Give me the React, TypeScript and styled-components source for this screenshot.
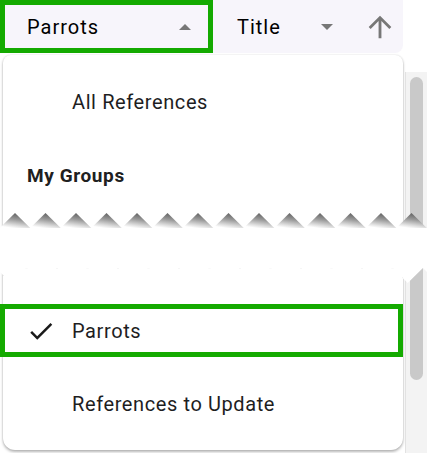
import React from "react";
import styled, { createGlobalStyle } from "styled-components";

const GlobalStyle = createGlobalStyle`
  html, body {
    margin: 0;
    background: #ffffff;
    overflow: hidden;
  }
  body {
    font-family: Roboto, "Liberation Sans", Arial, sans-serif;
  }
`;

const GREEN = "#14aa00";
const TEAR_PERIOD = 30.5;
const TEAR_DEPTH = 15;

const Page = styled.div`
  width: 427px;
  height: 453px;
  overflow: hidden;
  display: flex;
  flex-direction: column;
`;

const Toolbar = styled.div`
  display: flex;
  align-items: stretch;
  width: 403px;
  height: 53px;
  background: #f7f5fb;
  border-bottom-right-radius: 8px;
  flex: none;
`;

const SelectBox = styled.div<{ $width: number; $active?: boolean; $padLeft: number }>`
  box-sizing: border-box;
  width: ${(p) => p.$width}px;
  display: flex;
  align-items: center;
  justify-content: space-between;
  padding: 0 17px 0 ${(p) => p.$padLeft}px;
  border: ${(p) => (p.$active ? `5px solid ${GREEN}` : "none")};
  font-size: 20px;
  letter-spacing: 1px;
  color: #000;
`;

const DirectionButton = styled.div`
  flex: 1;
  display: flex;
  align-items: center;
  padding-left: 13px;
  color: #777;
`;

const Piece = styled.div<{ $lower?: boolean }>`
  position: relative;
  display: flex;
  align-items: flex-start;
  flex: none;
  height: ${(p) => (p.$lower ? 185 : 173)}px;
  margin-top: ${(p) => (p.$lower ? 40 : 2)}px;
`;

const Panel = styled.div<{ $lower?: boolean }>`
  box-sizing: border-box;
  margin-left: 3px;
  width: 400px;
  height: ${(p) => (p.$lower ? "182px" : "100%")};
  background: #fff;
  display: flex;
  flex-direction: column;
  gap: 21px;
  padding: ${(p) => (p.$lower ? "36px 0 20px" : "21px 0 0")};
  border-radius: ${(p) => (p.$lower ? "0 0 12px 12px" : "8px 8px 0 0")};
  box-shadow: 0 2px 3px rgba(0, 0, 0, 0.28), 0 0 2px rgba(0, 0, 0, 0.14);
`;

const Track = styled.div<{ $lower?: boolean }>`
  box-sizing: border-box;
  margin-left: 2px;
  width: 22px;
  height: ${(p) => (p.$lower ? "185px" : "156px")};
  margin-top: ${(p) => (p.$lower ? 0 : 17)}px;
  background: #f3f3f3;
  border-left: 1px solid #e2e2e2;
  padding: ${(p) => (p.$lower ? "0 4px" : "5px 4px 0")};
  display: flex;
  flex-direction: column;
`;

const Thumb = styled.div<{ $lower?: boolean }>`
  width: 13px;
  height: ${(p) => (p.$lower ? "112px" : "100%")};
  background: #c9c9c9;
  border-radius: ${(p) => (p.$lower ? "0 0 7px 7px" : "7px 7px 0 0")};
`;

const MenuItem = styled.div<{ $selected?: boolean }>`
  box-sizing: border-box;
  display: flex;
  align-items: center;
  flex: none;
  height: ${(p) => (p.$selected ? 53 : 52)}px;
  margin-left: ${(p) => (p.$selected ? -3 : 0)}px;
  padding-left: ${(p) => (p.$selected ? 22 : 24)}px;
  border: ${(p) => (p.$selected ? `5px solid ${GREEN}` : "none")};
  font-size: 20px;
  letter-spacing: 0.6px;
  color: #1e1e1f;
`;

const IconSlot = styled.span`
  width: 45px;
  flex: none;
  display: flex;
  align-items: center;
  color: #1a1a1a;
`;

const GroupHeader = styled.div`
  display: flex;
  align-items: center;
  flex: none;
  height: 52px;
  padding-left: 24px;
  font-size: 19px;
  font-weight: 700;
  letter-spacing: 0.6px;
  color: #202020;
`;

const Tear = styled.svg`
  position: absolute;
  left: 0;
  bottom: 0;
  display: block;
`;

const Caret = ({ up }: { up?: boolean }) => (
  <svg width="12" height="6" viewBox="0 0 12 6">
    <polygon points={up ? "0,6 6,0 12,6" : "0,0 12,0 6,6"} fill="#777" />
  </svg>
);

const ArrowUp = () => (
  <svg width="34" height="34" viewBox="0 0 24 24">
    <path fill="currentColor" d="M4 12l1.41 1.41L11 7.83V20h2V7.83l5.58 5.59L20 12l-8-8-8 8z" />
  </svg>
);

const Check = () => (
  <svg width="30" height="30" viewBox="0 0 24 24" style={{ marginLeft: -1 }}>
    <path fill="currentColor" d="M9 16.17L4.83 12l-1.42 1.41L9 19 21 7l-1.41-1.41z" />
  </svg>
);

// jagged top edge of the lower piece
const lowerClip = () => {
  const pts: string[] = ["-10px 15px"];
  for (let peak = 423 - TEAR_PERIOD * 14; peak < 460; peak += TEAR_PERIOD) {
    pts.push(`${peak - TEAR_PERIOD / 2}px ${TEAR_DEPTH}px`);
    pts.push(`${peak}px 0px`);
  }
  pts.push("470px 15px", "470px 200px", "-10px 200px");
  return `polygon(${pts.join(", ")})`;
};

const TearEdge = () => {
  const peaks = Array.from({ length: 14 }, (_, k) => 15 + k * TEAR_PERIOD);
  return (
    <Tear width="427" height={TEAR_DEPTH} viewBox={`0 0 427 ${TEAR_DEPTH}`}>
      <defs>
        <linearGradient id="tearShade" x1="0.7" y1="0" x2="0.4" y2="1">
          <stop offset="0" stopColor="#5a5a5a" />
          <stop offset="0.45" stopColor="#9a9a9a" />
          <stop offset="0.8" stopColor="#dcdcdc" />
          <stop offset="1" stopColor="#ffffff" />
        </linearGradient>
      </defs>
      {peaks.map((p) => (
        <polygon
          key={p}
          points={`${p - TEAR_PERIOD / 2},${TEAR_DEPTH} ${p},0 ${p + TEAR_PERIOD / 2},${TEAR_DEPTH}`}
          fill="url(#tearShade)"
        />
      ))}
    </Tear>
  );
};

export default function App() {
  return (
    <>
      <GlobalStyle />
      <Page>
        <Toolbar>
          <SelectBox $width={213} $padLeft={22} $active>
            <span>Parrots</span>
            <Caret up />
          </SelectBox>
          <SelectBox $width={137} $padLeft={24}>
            <span>Title</span>
            <Caret />
          </SelectBox>
          <DirectionButton>
            <ArrowUp />
          </DirectionButton>
        </Toolbar>

        <Piece style={{ clipPath: "inset(-10px -10px 0 -10px)" }}>
          <Panel>
            <MenuItem>
              <IconSlot />
              All References
            </MenuItem>
            <GroupHeader>My Groups</GroupHeader>
          </Panel>
          <Track>
            <Thumb />
          </Track>
          <TearEdge />
        </Piece>

        <Piece $lower style={{ clipPath: lowerClip() }}>
          <Panel $lower>
            <MenuItem $selected>
              <IconSlot>
                <Check />
              </IconSlot>
              Parrots
            </MenuItem>
            <MenuItem>
              <IconSlot />
              References to Update
            </MenuItem>
          </Panel>
          <Track $lower>
            <Thumb $lower />
          </Track>
        </Piece>
      </Page>
    </>
  );
}
